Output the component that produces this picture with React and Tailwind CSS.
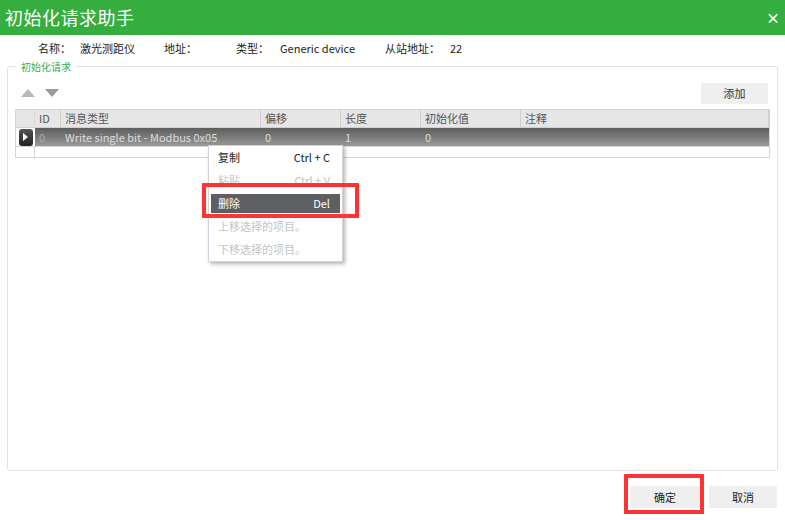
import React from 'react';

const font = { fontFamily: '"Noto Sans CJK SC", "Noto Sans", sans-serif' };

const columns = [
  { label: 'ID', w: 'w-[26px]' },
  { label: '消息类型', w: 'w-[200px]' },
  { label: '偏移', w: 'w-[80px]' },
  { label: '长度', w: 'w-[80px]' },
  { label: '初始化值', w: 'w-[100px]' },
  { label: '注释', w: 'flex-1' },
];

const row = ['0', 'Write single bit - Modbus 0x05', '0', '1', '0', ''];

const ContextMenu = () => (
  <div className="absolute left-[208px] top-[145px] w-[135px] bg-white border border-[#d4d4d4] shadow-[2px_2px_4px_rgba(0,0,0,0.3)] text-[11px]">
    <div className="flex justify-between items-center h-[23px] pl-[9px] pr-[12px] text-[#222]">
      <span>复制</span>
      <span>Ctrl + C</span>
    </div>
    <div className="flex justify-between items-center h-[23px] pl-[9px] pr-[12px] text-[#c4c4c4]">
      <span>粘贴</span>
      <span>Ctrl + V</span>
    </div>
    <div className="h-[23px] px-[2px] py-[2px]">
      <div className="flex justify-between items-center h-full pl-[7px] pr-[10px] bg-[#5d5f63] text-white">
        <span>删除</span>
        <span>Del</span>
      </div>
    </div>
    <div className="flex items-center h-[23px] pl-[9px] text-[#c4c4c4]">上移选择的项目。</div>
    <div className="flex items-center h-[23px] pl-[9px] text-[#c4c4c4]">下移选择的项目。</div>
  </div>
);

export default function App() {
  return (
    <div className="relative w-[785px] h-[520px] bg-white overflow-hidden" style={font}>
      {/* title bar */}
      <div className="h-[35px] bg-[#35ad3f] flex items-center justify-between pl-[5px] pr-[5px]">
        <span className="text-white text-[18px] tracking-[0.5px]">初始化请求助手</span>
        <span className="text-white text-[14px] font-bold">×</span>
      </div>

      {/* device info */}
      <div className="flex items-center h-[24px] mt-[1px] text-[11px] text-[#222]">
        <span className="ml-[38px] w-[42px]">名称：</span>
        <span className="w-[84px]">激光测距仪</span>
        <span className="w-[72px]">地址：</span>
        <span className="w-[44px]">类型：</span>
        <span className="w-[105px]">Generic device</span>
        <span className="w-[65px]">从站地址：</span>
        <span>22</span>
      </div>

      {/* group box */}
      <div className="relative mx-[7px] mt-[6px] h-[405px] border border-[#e2e2e2] rounded-[3px] px-[7px]">
        <span className="absolute left-[8px] top-[-8px] px-[5px] bg-white text-[10px] text-[#3aa944]">初始化请求</span>

        <div className="flex items-center justify-between mt-[15px] h-[22px]">
          <div className="flex items-center gap-[10px] pl-[6px]">
            <svg width="14" height="8" viewBox="0 0 14 8"><path d="M0 8 L7 0 L14 8 Z" fill="#b9b9b9" /></svg>
            <svg width="14" height="8" viewBox="0 0 14 8"><path d="M0 0 L14 0 L7 8 Z" fill="#9a9a9a" /></svg>
          </div>
          <button className="w-[67px] h-[21px] bg-[#efefef] text-[11px] text-[#333] mr-[2px]">添加</button>
        </div>

        {/* table */}
        <div className="mt-[5px] border border-[#d6d6d6] text-[11px]">
          <div className="flex h-[18px] bg-[#e6e6e6] border-b border-[#d0d0d0]">
            <div className="w-[19px] border-r border-[#d6d6d6]" />
            {columns.map((c) => (
              <div key={c.label} className={`${c.w} flex items-center pl-[4px] border-r border-[#cfcfcf] text-[#555]`}>
                {c.label}
              </div>
            ))}
          </div>
          <div className="flex h-[18px]">
            <div className="w-[19px] flex items-center justify-center bg-white">
              <div className="w-[14px] h-[17px] rounded-[3px] bg-gradient-to-b from-[#555] to-[#222] flex items-center justify-center">
                <svg width="5" height="8" viewBox="0 0 5 8"><path d="M0 0 L5 4 L0 8 Z" fill="#fff" /></svg>
              </div>
            </div>
            <div className="flex flex-1 bg-gradient-to-b from-[#5e5e5e] via-[#7a7a7a] to-[#9c9c9c]">
              {columns.map((c, i) => (
                <div key={c.label} className={`${c.w} flex items-center pl-[4px] ${i === 0 ? 'text-[#aaa]' : 'text-[#ddd]'}`}>
                  {row[i]}
                </div>
              ))}
            </div>
          </div>
          <div className="flex h-[11px] border-t border-[#d6d6d6]">
            <div className="w-[19px] border-r border-[#d6d6d6]" />
          </div>
        </div>
      </div>

      {/* footer buttons */}
      <div className="flex justify-end gap-[9px] mt-[15px] pr-[8px]">
        <button className="w-[70px] h-[22px] bg-[#efefef] text-[11px] text-[#222]">确定</button>
        <button className="w-[68px] h-[22px] bg-[#efefef] text-[11px] text-[#222]">取消</button>
      </div>

      <ContextMenu />

      {/* red annotation boxes */}
      <div className="absolute left-[202px] top-[183px] w-[157px] h-[35px] border-[4px] border-[#ff3333]" />
      <div className="absolute left-[624px] top-[474px] w-[80px] h-[40px] border-[4px] border-[#ff3333]" />
    </div>
  );
}
